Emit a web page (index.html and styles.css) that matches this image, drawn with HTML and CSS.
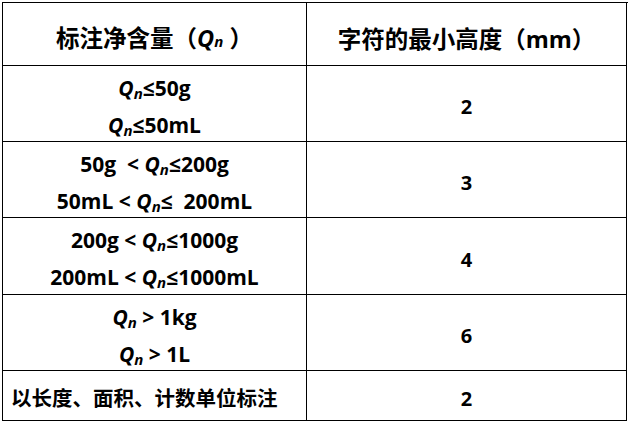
FILE: index.html
```html
<!DOCTYPE html>
<html lang="zh">
<head>
<meta charset="utf-8">
<link rel="stylesheet" href="styles.css">
</head>
<body>
<div class="table">
  <div class="cell head"><span class="line">标注净含量（<i class="q">Q</i><i class="n-head">n</i> ）</span></div>
  <div class="cell head"><span class="line">字符的最小高度（mm）</span></div>

  <div class="cell two">
    <span class="line"><i class="q">Q</i><i class="sub">n</i>≤50g</span>
    <span class="line"><i class="q">Q</i><i class="sub">n</i>≤50mL</span>
  </div>
  <div class="cell num"><span class="line">2</span></div>

  <div class="cell two">
    <span class="line">50g&nbsp; &lt; <i class="q">Q</i><i class="sub">n</i>≤200g</span>
    <span class="line">50mL &lt; <i class="q">Q</i><i class="sub">n</i>≤&nbsp; 200mL</span>
  </div>
  <div class="cell num"><span class="line">3</span></div>

  <div class="cell two">
    <span class="line">200g &lt; <i class="q">Q</i><i class="sub">n</i>≤1000g</span>
    <span class="line">200mL &lt; <i class="q">Q</i><i class="sub">n</i>≤1000mL</span>
  </div>
  <div class="cell num"><span class="line">4</span></div>

  <div class="cell two">
    <span class="line"><i class="q">Q</i><i class="sub">n</i> &gt; 1kg</span>
    <span class="line"><i class="q">Q</i><i class="sub">n</i> &gt; 1L</span>
  </div>
  <div class="cell num"><span class="line">6</span></div>

  <div class="cell left"><span class="line">以长度、面积、计数单位标注</span></div>
  <div class="cell num"><span class="line">2</span></div>
</div>
</body>
</html>
```
FILE: styles.css
```css
html, body {
  margin: 0;
  padding: 0;
  background: #ffffff;
}

body {
  padding: 2px;
  font-family: "Open Sans", "Noto Sans CJK SC", sans-serif;
  font-weight: 700;
  color: #000000;
}

.table {
  display: grid;
  grid-template-columns: 304px 320px;
  grid-template-rows: 63px 76px 76px 77px 76px 50px;
  width: 625px;
  border-top: 1px solid #000;
  border-left: 1px solid #000;
}

.cell {
  border-right: 1px solid #000;
  border-bottom: 1px solid #000;
  display: flex;
  flex-direction: column;
  align-items: center;
  justify-content: center;
  font-size: 21px;
  line-height: 37px;
  padding-top: 6px;
  box-sizing: border-box;
}

.head {
  font-size: 23.5px;
  line-height: 30px;
  padding-top: 10px;
}

.num {
  font-size: 20px;
}

.line {
  display: block;
  white-space: nowrap;
}

.q {
  font-style: italic;
}

.sub {
  font-style: italic;
  font-size: 15px;
  position: relative;
  top: 3px;
  line-height: 0;
}

.n-head {
  font-style: italic;
  font-size: 15px;
}

.left {
  align-items: flex-start;
  padding-left: 8px;
  padding-top: 4px;
  font-size: 20.5px;
  font-family: "Noto Sans CJK SC", sans-serif;
}
```
